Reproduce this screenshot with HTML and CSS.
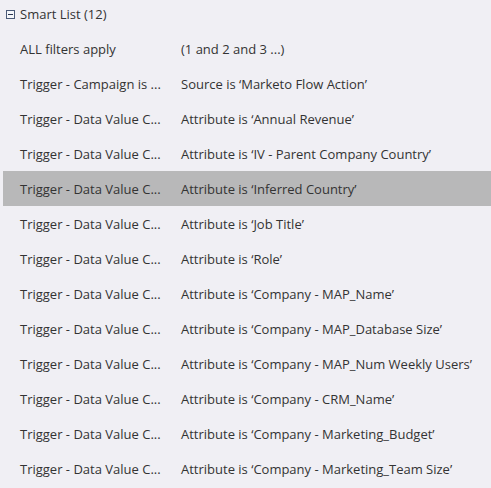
FILE: index.html
```html
<!DOCTYPE html>
<html>
<head>
<meta charset="utf-8">
<link rel="stylesheet" href="styles.css">
</head>
<body>
<div class="tree">
  <div class="header">
    <span class="toggle"><span class="bar"></span></span>
    <span class="title">Smart List (12)</span>
  </div>
  <div class="row"><span class="name">ALL filters apply</span><span class="desc">(1 and 2 and 3 ...)</span></div>
  <div class="row"><span class="name">Trigger - Campaign is ...</span><span class="desc">Source is ‘Marketo Flow Action’</span></div>
  <div class="row"><span class="name">Trigger - Data Value C...</span><span class="desc">Attribute is ‘Annual Revenue’</span></div>
  <div class="row"><span class="name">Trigger - Data Value C...</span><span class="desc">Attribute is ‘IV - Parent Company Country’</span></div>
  <div class="row selected"><span class="name">Trigger - Data Value C...</span><span class="desc">Attribute is ‘Inferred Country’</span></div>
  <div class="row"><span class="name">Trigger - Data Value C...</span><span class="desc">Attribute is ‘Job Title’</span></div>
  <div class="row"><span class="name">Trigger - Data Value C...</span><span class="desc">Attribute is ‘Role’</span></div>
  <div class="row"><span class="name">Trigger - Data Value C...</span><span class="desc">Attribute is ‘Company - MAP_Name’</span></div>
  <div class="row"><span class="name">Trigger - Data Value C...</span><span class="desc">Attribute is ‘Company - MAP_Database Size’</span></div>
  <div class="row"><span class="name">Trigger - Data Value C...</span><span class="desc">Attribute is ‘Company - MAP_Num Weekly Users’</span></div>
  <div class="row"><span class="name">Trigger - Data Value C...</span><span class="desc">Attribute is ‘Company - CRM_Name’</span></div>
  <div class="row"><span class="name">Trigger - Data Value C...</span><span class="desc">Attribute is ‘Company - Marketing_Budget’</span></div>
  <div class="row"><span class="name">Trigger - Data Value C...</span><span class="desc">Attribute is ‘Company - Marketing_Team Size’</span></div>
</div>
</body>
</html>
```
FILE: styles.css
```css
html, body {
  margin: 0;
  padding: 0;
  background: #f0eff4;
}
body {
  font-family: "Open Sans", "Liberation Sans", sans-serif;
  font-size: 13px;
  color: #333333;
}
.tree {
  display: flex;
  flex-direction: column;
}
.header {
  height: 31px;
  display: flex;
  align-items: flex-start;
  padding-top: 5px;
  box-sizing: border-box;
  padding-left: 6px;
}
.toggle {
  width: 7px;
  height: 7px;
  border: 1px solid #4a5a78;
  background: #f4f6fa;
  margin-top: 5px;
  margin-right: 5px;
  display: flex;
  align-items: center;
  justify-content: center;
}
.toggle .bar {
  width: 5px;
  height: 1px;
  background: #2a3550;
}
.title {
  line-height: 18px;
}
.row {
  height: 35px;
  display: flex;
  align-items: center;
  margin-left: 3px;
  padding-left: 17px;
}
.row.selected {
  background: #b8b8b9;
}
.name {
  width: 161px;
  flex: none;
  white-space: nowrap;
}
.desc {
  white-space: nowrap;
}
```
